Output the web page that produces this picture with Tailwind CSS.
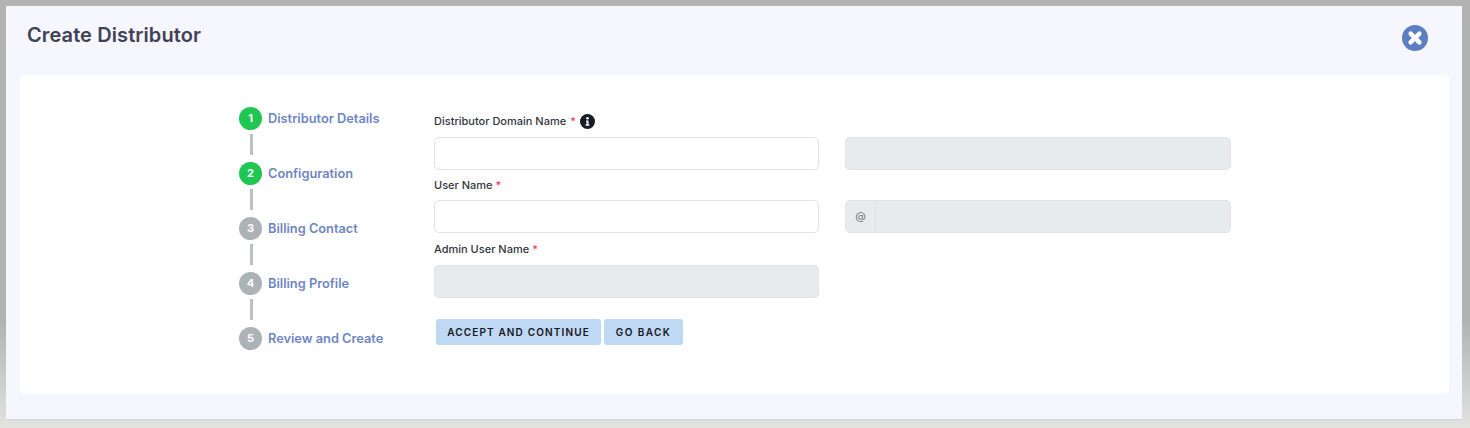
<!DOCTYPE html>
<html lang="en">
  <head>
    <meta charset="UTF-8" />
    <title>Create Distributor</title>
    <script src="https://cdn.jsdelivr.net/npm/@tailwindcss/browser@4"></script>
  </head>
  <body class="h-[428px] overflow-hidden bg-gradient-to-b from-[#b2b3b2] from-[75%] to-[#e2e2e1] font-['Inter','Liberation_Sans',sans-serif]">
    <div class="mx-[8px] ml-[6px] mt-[6px] h-[414px] bg-[#f5f6fe] border-b border-[#d4d4da]">
      <!-- header -->
      <header class="flex h-[69px] items-start justify-between pl-[21px] pr-[34px]">
        <h1 class="mt-[16px] text-[20px] leading-[26px] font-semibold tracking-[0.1px] text-[#3f4254]">Create Distributor</h1>
        <button class="mt-[19px]">
          <svg class="h-[26px] w-[26px]" viewBox="0 0 26 26">
            <circle cx="13" cy="13" r="13" fill="#5b7fc0" />
            <path d="M8.6 8.6l8.8 8.8M17.4 8.6l-8.8 8.8" stroke="#fff" stroke-width="4.4" stroke-linecap="round" />
          </svg>
        </button>
      </header>

      <!-- card -->
      <main class="ml-[14px] mr-[13px] flex h-[319px] rounded-[5px] bg-white pl-[219px] pt-[32px]">
        <!-- stepper -->
        <ol class="w-[195px] shrink-0">
          <li class="flex h-[22px] items-center gap-[6px]">
            <span class="flex h-[23px] w-[23px] items-center justify-center rounded-full bg-[#1fc752] text-[11px] font-bold text-white">1</span>
            <span class="pt-[1px] text-[12.8px] font-semibold text-[#6e86c2]">Distributor Details</span>
          </li>
          <li class="mt-[5px] mb-[7px] ml-[11px] h-[21px] w-[3px] bg-[#bcc0c3]"></li>
          <li class="flex h-[22px] items-center gap-[6px]">
            <span class="flex h-[23px] w-[23px] items-center justify-center rounded-full bg-[#1fc752] text-[11px] font-bold text-white">2</span>
            <span class="pt-[1px] text-[12.8px] font-semibold text-[#6e86c2]">Configuration</span>
          </li>
          <li class="mt-[5px] mb-[7px] ml-[11px] h-[21px] w-[3px] bg-[#bcc0c3]"></li>
          <li class="flex h-[22px] items-center gap-[6px]">
            <span class="flex h-[23px] w-[23px] items-center justify-center rounded-full bg-[#adb2b7] text-[11px] font-bold text-white">3</span>
            <span class="pt-[1px] text-[12.8px] font-semibold text-[#6e86c2]">Billing Contact</span>
          </li>
          <li class="mt-[5px] mb-[7px] ml-[11px] h-[21px] w-[3px] bg-[#bcc0c3]"></li>
          <li class="flex h-[22px] items-center gap-[6px]">
            <span class="flex h-[23px] w-[23px] items-center justify-center rounded-full bg-[#adb2b7] text-[11px] font-bold text-white">4</span>
            <span class="pt-[1px] text-[12.8px] font-semibold text-[#6e86c2]">Billing Profile</span>
          </li>
          <li class="mt-[5px] mb-[7px] ml-[11px] h-[21px] w-[3px] bg-[#bcc0c3]"></li>
          <li class="flex h-[22px] items-center gap-[6px]">
            <span class="flex h-[23px] w-[23px] items-center justify-center rounded-full bg-[#adb2b7] text-[11px] font-bold text-white">5</span>
            <span class="pt-[1px] text-[12.8px] font-semibold text-[#6e86c2]">Review and Create</span>
          </li>
        </ol>

        <!-- form -->
        <form class="w-[797px] pt-[5px]">
          <div class="grid grid-cols-[385px_386px] gap-x-[26px]">
            <div>
              <label class="flex h-[19px] items-center gap-[4px] text-[11px] font-medium text-[#33353f]">
                Distributor Domain Name <span class="text-[#ef3b4d]">*</span>
                <svg class="h-[15px] w-[15px]" viewBox="0 0 15 15">
                  <circle cx="7.5" cy="7.5" r="7.5" fill="#181c24" />
                  <circle cx="7.5" cy="4.2" r="1.3" fill="#fff" />
                  <path d="M6 6.5h2.5v4h1v1.2h-4v-1.2h1v-2.8h-.5z" fill="#fff" />
                </svg>
              </label>
              <input class="mt-[6px] block h-[33px] w-full rounded-[5px] border border-[#dfe2e6] bg-white" />
            </div>
            <div class="pt-[25px]">
              <input disabled class="block h-[33px] w-full rounded-[5px] border border-[#dfe2e6] bg-[#e8ebee]" />
            </div>
            <div class="mt-[6px]">
              <label class="flex h-[19px] items-center gap-[3px] text-[11px] font-medium text-[#33353f]">User Name <span class="text-[#ef3b4d]">*</span></label>
              <input class="mt-[5px] block h-[33px] w-full rounded-[5px] border border-[#dfe2e6] bg-white" />
            </div>
            <div class="mt-[6px] pt-[24px]">
              <div class="flex h-[33px]">
                <span class="flex w-[31px] items-center justify-center rounded-l-[5px] border border-[#dfe2e6] bg-[#e8ebee] text-[11px] text-[#70757b]">@</span>
                <input disabled class="block h-[33px] min-w-0 flex-1 rounded-r-[5px] border border-l-0 border-[#dfe2e6] bg-[#e8ebee]" />
              </div>
            </div>
            <div class="mt-[7px]">
              <label class="flex h-[19px] items-center gap-[3px] text-[11px] font-medium text-[#33353f]">Admin User Name <span class="text-[#ef3b4d]">*</span></label>
              <input disabled class="mt-[6px] block h-[33px] w-full rounded-[5px] border border-[#dfe2e6] bg-[#e8ebee]" />
            </div>
          </div>
          <div class="mt-[21px] ml-[2px] flex gap-[3px]">
            <button type="button" class="h-[26px] w-[165px] rounded-[3px] bg-[#bfd8f3] text-[10px] font-semibold tracking-[1.15px] text-[#15171d]">ACCEPT AND CONTINUE</button>
            <button type="button" class="h-[26px] w-[79px] rounded-[3px] bg-[#bfd8f3] text-[10px] font-semibold tracking-[1.4px] text-[#15171d]">GO BACK</button>
          </div>
        </form>
      </main>
    </div>
  </body>
</html>
